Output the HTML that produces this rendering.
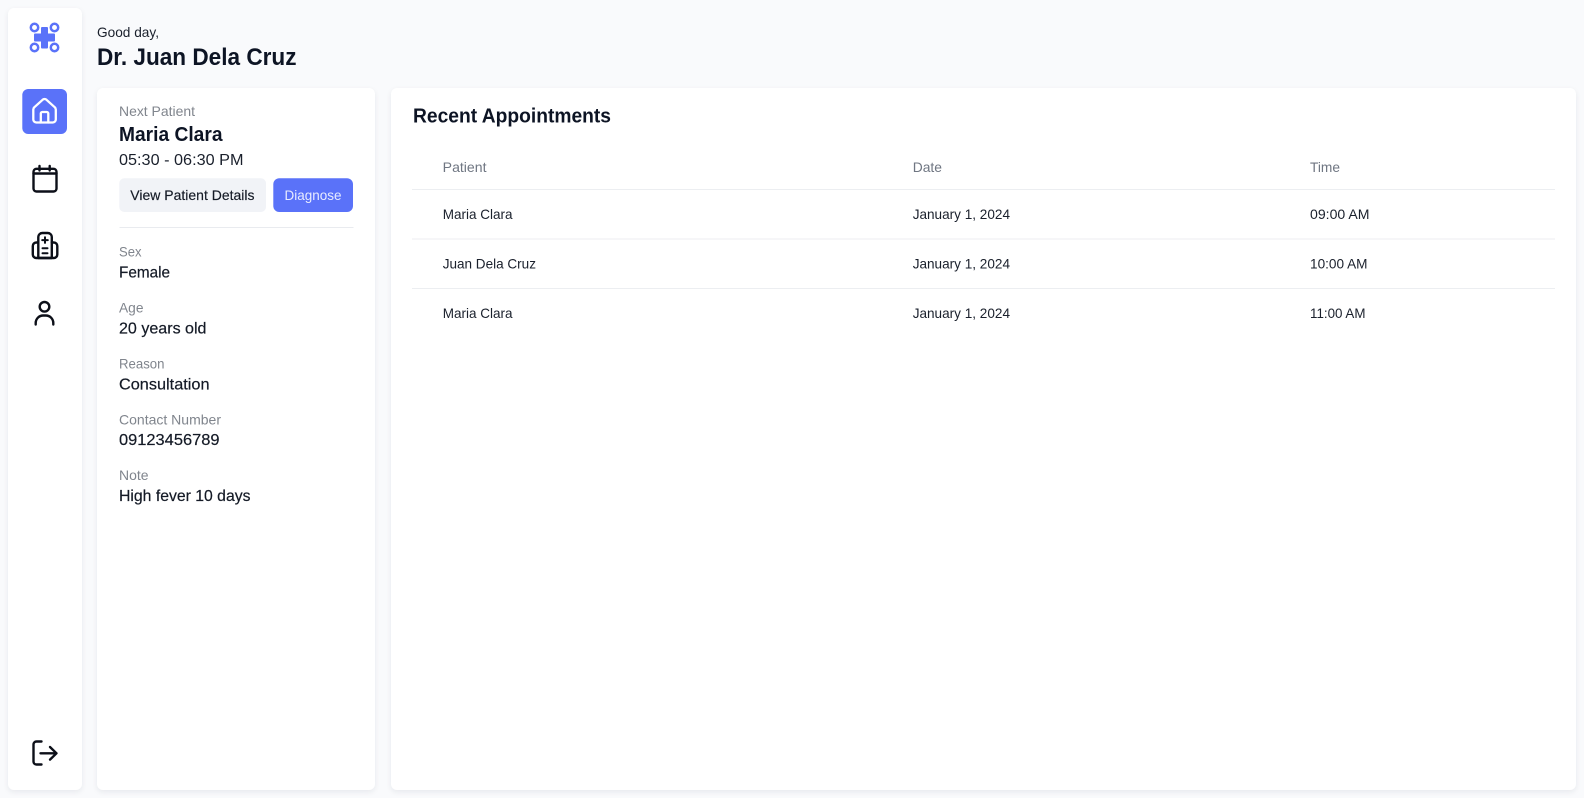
<!DOCTYPE html>
<html><head><meta charset="utf-8"><title>Dashboard</title>
<style>
html,body{margin:0;padding:0;width:1584px;height:798px;overflow:hidden;background:#f9fafc}
.c{position:absolute;background:#fff;border-radius:6px;box-shadow:0 2px 6px rgba(30,41,59,.08)}
svg{position:absolute;left:0;top:0}
text{font-family:"Liberation Sans",sans-serif;font-size:14px;fill:#1a202c}
.l{fill:#80858d}.h{fill:#6f7682}
.v{font-size:16px;fill:#141a26;stroke:#141a26;stroke-width:.2}
.b{font-weight:700;fill:#0d1424}
.ic{fill:none;stroke:#0c0f18;stroke-width:2.4;stroke-linecap:round;stroke-linejoin:round}
</style></head><body>
<div class="c" style="left:8px;top:8px;width:74px;height:782px"></div>
<div class="c" style="left:97px;top:88px;width:278px;height:702px"></div>
<div class="c" style="left:391px;top:88px;width:1185px;height:702px"></div>
<svg width="1584" height="798" viewBox="0 0 1584 798">
<!-- logo -->
<g fill="none" stroke="#5a72f9" stroke-width="2.500">
<circle cx="34.500" cy="27.500" r="3.700"/><circle cx="54.500" cy="27.500" r="3.700"/><circle cx="34.500" cy="47.500" r="3.700"/><circle cx="54.500" cy="47.500" r="3.700"/>
</g>
<path fill="#5a72f9" d="M41 28a1 1 0 0 1 1-1h5a1 1 0 0 1 1 1v5.500h6a1 1 0 0 1 1 1v6a1 1 0 0 1-1 1h-6v6a1 1 0 0 1-1 1h-5a1 1 0 0 1-1-1v-6h-6a1 1 0 0 1-1-1v-6a1 1 0 0 1 1-1h6z"/>
<!-- home -->
<rect x="22.300" y="89" width="44.700" height="45" rx="6" fill="#5a72f9"/>
<g fill="none" stroke="#fff" stroke-width="2.300" stroke-linecap="round" stroke-linejoin="round">
<path d="M33.300 109.500a3 3 0 0 1 1.100-2.300l8.200-7.400a3 3 0 0 1 3.900 0l8.200 7.400a3 3 0 0 1 1.100 2.300v10a3 3 0 0 1-3 3h-16.500a3 3 0 0 1-3-3z"/>
<path d="M40.800 122.500v-9a1.500 1.500 0 0 1 1.500-1.500h4.500a1.500 1.500 0 0 1 1.500 1.500v9"/>
</g>
<!-- calendar -->
<g class="ic">
<rect x="33.500" y="168.800" width="23" height="22.700" rx="3"/>
<path d="M33.500 173.500h23M39.500 166v4.500M49.700 166v4.500"/>
</g>
<!-- hospital -->
<g class="ic">
<path d="M38.300 258v-21a4 4 0 0 1 4-4h5.500a4 4 0 0 1 4 4v21z"/>
<path d="M38.300 242.500h-2a3.500 3.500 0 0 0-3.500 3.500v8.500a3.500 3.500 0 0 0 3.500 3.500h17.500a3.500 3.500 0 0 0 3.500-3.500v-8.500a3.500 3.500 0 0 0-3.500-3.500h-2"/>
<path d="M45 237.300v5.600M42.200 240.100h5.600M42.500 248.300h5M42.500 253.300h5" stroke-width="2"/>
</g>
<!-- user -->
<g class="ic">
<circle cx="44.500" cy="306.800" r="4.800"/>
<path d="M35.700 324.500v-1.500a7.500 7.500 0 0 1 7.500-7.500h2.600a7.500 7.500 0 0 1 7.500 7.500v1.500"/>
</g>
<!-- logout -->
<g class="ic">
<path d="M41.500 741.500h-5a3 3 0 0 0-3 3v17a3 3 0 0 0 3 3h5"/>
<path d="M40.500 753.300h16M50 747l6.500 6.300-6.500 6.300"/>
</g>

<text x="97" y="37" textLength="62" lengthAdjust="spacingAndGlyphs">Good day,</text>
<text x="97" y="65" class="b" style="font-size:24px" textLength="199.500" lengthAdjust="spacingAndGlyphs">Dr. Juan Dela Cruz</text>

<text x="119" y="116" class="l" textLength="76" lengthAdjust="spacingAndGlyphs">Next Patient</text>
<text x="119" y="141" class="b" style="font-size:20px" textLength="103.500" lengthAdjust="spacingAndGlyphs">Maria Clara</text>
<text x="119" y="165" style="font-size:16px" textLength="124.500" lengthAdjust="spacingAndGlyphs">05:30 - 06:30 PM</text>

<rect x="119.300" y="178.300" width="146.700" height="33.700" rx="5" fill="#f1f3f7"/>
<rect x="273.300" y="178.300" width="79.700" height="33.700" rx="6" fill="#5a72f9"/>
<text x="130.300" y="200" class="v" style="font-size:14px;stroke-width:.15" textLength="124.200" lengthAdjust="spacingAndGlyphs">View Patient Details</text>
<text x="284.500" y="200" style="fill:#e8ecff" textLength="57" lengthAdjust="spacingAndGlyphs">Diagnose</text>
<rect x="119.500" y="227" width="234" height="1" fill="#e9ebef"/>

<text x="119" y="256.500" class="l" textLength="22.500" lengthAdjust="spacingAndGlyphs">Sex</text>
<text x="119" y="277.500" class="v" textLength="51" lengthAdjust="spacingAndGlyphs">Female</text>
<text x="119" y="312.500" class="l" textLength="24.500" lengthAdjust="spacingAndGlyphs">Age</text>
<text x="119" y="333.500" class="v" textLength="87.500" lengthAdjust="spacingAndGlyphs">20 years old</text>
<text x="119" y="368.500" class="l" textLength="45.500" lengthAdjust="spacingAndGlyphs">Reason</text>
<text x="119" y="389.500" class="v" textLength="90.500" lengthAdjust="spacingAndGlyphs">Consultation</text>
<text x="119" y="424.500" class="l" textLength="102" lengthAdjust="spacingAndGlyphs">Contact Number</text>
<text x="119" y="445" class="v" textLength="100.500" lengthAdjust="spacingAndGlyphs">09123456789</text>
<text x="119" y="480" class="l" textLength="29.500" lengthAdjust="spacingAndGlyphs">Note</text>
<text x="119" y="501" class="v" textLength="131.500" lengthAdjust="spacingAndGlyphs">High fever 10 days</text>

<text x="413" y="122.500" class="b" style="font-size:20px" textLength="198" lengthAdjust="spacingAndGlyphs">Recent Appointments</text>
<text x="442.700" y="172" class="h" textLength="43.800" lengthAdjust="spacingAndGlyphs">Patient</text>
<text x="912.700" y="172" class="h" textLength="29.300" lengthAdjust="spacingAndGlyphs">Date</text>
<text x="1310" y="172" class="h" textLength="30" lengthAdjust="spacingAndGlyphs">Time</text>
<rect x="412" y="189" width="1143" height="1" fill="#eceef1"/>
<rect x="412" y="238.500" width="1143" height="1" fill="#eceef1"/>
<rect x="412" y="288" width="1143" height="1" fill="#eceef1"/>

<text x="442.700" y="218.800" textLength="69.800" lengthAdjust="spacingAndGlyphs">Maria Clara</text>
<text x="912.700" y="218.800" textLength="97.300" lengthAdjust="spacingAndGlyphs">January 1, 2024</text>
<text x="1310" y="218.800" textLength="59.500" lengthAdjust="spacingAndGlyphs">09:00 AM</text>
<text x="442.700" y="268.300" textLength="93.300" lengthAdjust="spacingAndGlyphs">Juan Dela Cruz</text>
<text x="912.700" y="268.300" textLength="97.300" lengthAdjust="spacingAndGlyphs">January 1, 2024</text>
<text x="1310" y="268.300" textLength="57.500" lengthAdjust="spacingAndGlyphs">10:00 AM</text>
<text x="442.700" y="317.800" textLength="69.800" lengthAdjust="spacingAndGlyphs">Maria Clara</text>
<text x="912.700" y="317.800" textLength="97.300" lengthAdjust="spacingAndGlyphs">January 1, 2024</text>
<text x="1310" y="317.800" textLength="55.500" lengthAdjust="spacingAndGlyphs">11:00 AM</text>
</svg>
</body></html>
